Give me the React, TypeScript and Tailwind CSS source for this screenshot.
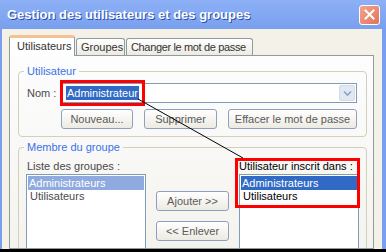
import React from 'react';

const btn =
  'h-[20px] rounded-[3px] border border-[#8fa0bd] bg-gradient-to-b from-[#ffffff] to-[#eceae2] text-[#5a5a5a] flex items-center justify-center';

export default function App() {
  return (
    <div className="relative w-[386px] h-[252px] overflow-hidden bg-black font-['Liberation_Sans',Arial,sans-serif] text-[11px] leading-[13px] whitespace-nowrap">
      <div className="flex flex-col h-[249px] overflow-hidden">
        {/* title bar */}
        <div className="h-[29px] shrink-0 flex items-center pl-[7px] bg-gradient-to-b from-[#8db0f6] to-[#79a0ef]">
          <span className="text-white font-bold text-[13px] [text-shadow:1px_1px_0_#2a4fa8]">
            Gestion des utilisateurs et des groupes
          </span>
          <div className="ml-auto mr-[6px] w-[21px] h-[20px] rounded-[3px] border border-white bg-gradient-to-br from-[#f2a58c] to-[#e1735c] flex items-center justify-center">
            <svg width="11" height="11" viewBox="0 0 11 11">
              <path d="M1.5 1.5 L9.5 9.5 M9.5 1.5 L1.5 9.5" stroke="white" strokeWidth="2" strokeLinecap="square" />
            </svg>
          </div>
        </div>

        {/* body */}
        <div className="flex-1 min-h-0 flex flex-col bg-[#f3f1e8] border-l-[2px] border-r-[4px] border-[#7a9ff1] pl-[7px] pr-[8px] pt-[6px]">
          <div className="flex items-end h-[20px] shrink-0 text-[#333]">
            <div className="relative z-10 h-[21px] -mb-px w-[66px] bg-white border border-b-0 border-[#919b9c] border-t-[3px] border-t-[#f5c193] rounded-t-[3px] pl-[7px] pt-[2px]">
              Utilisateurs
            </div>
            <div className="h-[17px] w-[49px] ml-px bg-gradient-to-b from-white to-[#ebeae3] border border-b-0 border-[#919b9c] rounded-t-[3px] pl-[4px] pt-[2px]">
              Groupes
            </div>
            <div className="h-[17px] w-[127px] ml-[1px] bg-gradient-to-b from-white to-[#ebeae3] border border-b-0 border-[#919b9c] rounded-t-[3px] pl-[4px] pt-[2px] tracking-[-0.35px] overflow-hidden">
              Changer le mot de passe
            </div>
          </div>

          <div className="flex-1 min-h-0 border border-[#919b9c] bg-gradient-to-b from-[#fdfdfe] to-[#f4f3ee] pl-[8px] pr-[6px] overflow-hidden">
            <fieldset className="mt-[9px] border border-[#d0d0bf] rounded-[4px] pl-[8px] pr-[9px] pb-[7px]">
              <legend className="-ml-[3px] px-[3px] text-[#3a73e6]">Utilisateur</legend>
              <div className="flex items-center mt-[5px]">
                <span className="w-[35px] text-[#4a4a4a]">Nom :</span>
                <div className="flex-1 h-[20px] border border-[#7f9db9] bg-white flex items-center">
                  <span className="ml-[3px] h-[14px] px-[1px] bg-[#316ac5] text-white leading-[14px]">Administrateur</span>
                  <div className="ml-auto mr-px w-[16px] h-[16px] rounded-[2px] bg-[#e2e8f2] border border-[#d4dbe8] flex items-center justify-center">
                    <svg width="9" height="7" viewBox="0 0 9 7">
                      <path d="M1 1.5 L4.5 5 L8 1.5" stroke="#8aa2cc" strokeWidth="1.6" fill="none" />
                    </svg>
                  </div>
                </div>
              </div>
              <div className="flex gap-[11px] mt-[6px] pl-[34px]">
                <div className={`${btn} w-[72px]`}>Nouveau...</div>
                <div className={`${btn} w-[73px]`}>Supprimer</div>
                <div className={`${btn} w-[129px]`}>Effacer le mot de passe</div>
              </div>
            </fieldset>

            <fieldset className="mt-[4px] border border-[#d0d0bf] rounded-[4px] pl-[7px] pr-[7px]">
              <legend className="-ml-[2px] px-[3px] text-[#3a73e6]">Membre du groupe</legend>
              <div className="flex mt-[6px]">
                <div className="w-[120px] flex flex-col">
                  <span className="pl-px text-[#4a4a4a]">Liste des groupes :</span>
                  <div className="mt-[1px] h-[100px] border border-[#7f9db9] bg-white p-[1px] text-[#4a4a4a]">
                    <div className="h-[14px] leading-[14px] bg-[#8eaade] text-white pl-[1px]">Administrateurs</div>
                    <div className="h-[13px] leading-[13px] pl-[2px]">Utilisateurs</div>
                  </div>
                </div>
                <div className="w-[73px] ml-[10px] mt-[31px] flex flex-col gap-[10px]">
                  <div className={`${btn} w-[73px]`}>Ajouter &gt;&gt;</div>
                  <div className={`${btn} w-[73px]`}>&lt;&lt; Enlever</div>
                </div>
                <div className="w-[120px] ml-[10px] flex flex-col">
                  <span className="text-black">Utilisateur inscrit dans :</span>
                  <div className="mt-[1px] h-[100px] border border-[#7f9db9] bg-white p-[1px] text-black">
                    <div className="h-[14px] leading-[14px] bg-[#316ac5] text-white pl-[1px]">Administrateurs</div>
                    <div className="h-[13px] leading-[13px] pl-[2px]">Utilisateurs</div>
                  </div>
                </div>
              </div>
            </fieldset>
          </div>
        </div>
      </div>

      {/* annotations */}
      <div className="absolute left-[60px] top-[80px] w-[85px] h-[26px] border-[3px] border-[#ff0000]" />
      <div className="absolute left-[235px] top-[158px] w-[125px] h-[50px] border-[3px] border-[#ff0000]" />
      <svg className="absolute left-0 top-0 pointer-events-none" width="386" height="252">
        <line x1="138" y1="99" x2="243" y2="158" stroke="black" strokeWidth="1" />
      </svg>
    </div>
  );
}
